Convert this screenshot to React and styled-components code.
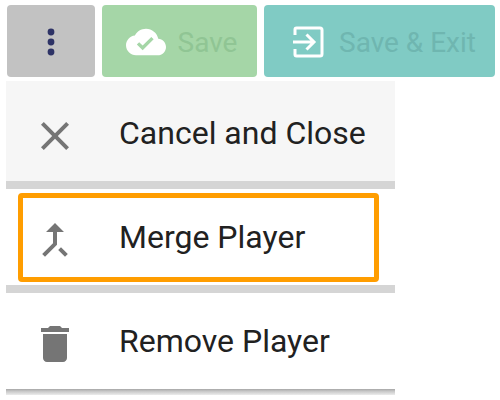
import React from "react";
import styled, { createGlobalStyle } from "styled-components";

const GlobalStyle = createGlobalStyle`
  html, body {
    margin: 0;
    background: #fff;
    font-family: Roboto, "Liberation Sans", sans-serif;
  }
`;

const Page = styled.div`
  width: 500px;
  height: 400px;
  padding: 5px 5px 0 7px;
  box-sizing: border-box;
  overflow: hidden;
`;

const Toolbar = styled.div`
  display: flex;
  gap: 7px;
  height: 72px;
`;

const ToolButton = styled.button`
  display: flex;
  align-items: center;
  justify-content: center;
  gap: ${({ $gap }) => $gap || 11}px;
  width: ${({ $width }) => $width}px;
  height: 72px;
  padding: 2px 0 0 ${({ $left }) => $left || 0}px;
  box-sizing: border-box;
  border: 0;
  border-radius: 4px;
  background: ${({ $bg }) => $bg};
  color: ${({ $color }) => $color};
  font: 400 28px Roboto, sans-serif;
`;

const Menu = styled.div`
  width: 389px;
  margin: 4px 0 0 -1px;
  display: flex;
  flex-direction: column;
`;

const Row = styled.div`
  height: ${({ $height }) => $height}px;
  background: ${({ $bg }) => $bg || "#fff"};
  border-bottom: ${({ $rule }) => $rule || "8px solid #d5d5d5"};
  padding: ${({ $top }) => $top || 0}px 16px 0 12px;
  box-sizing: content-box;
  display: flex;
  align-items: center;
`;

const Item = styled.div`
  flex: 1;
  height: ${({ $active }) => ($active ? "89px" : "auto")};
  display: flex;
  align-items: center;
  box-sizing: border-box;
  border: 5px solid ${({ $active }) => ($active ? "#ff9d00" : "transparent")};
  border-radius: 4px;
  color: #212121;
  font-size: 32px;
`;

const IconSlot = styled.span`
  display: flex;
  justify-content: center;
  width: 64px;
  margin: 6px 32px 0 0;
  color: #757575;
`;

const MenuIcon = styled.svg`
  width: 48px;
  height: 48px;
  fill: currentColor;
`;

const BottomEdge = styled.div`
  height: 6px;
  background: linear-gradient(#a6a6a6, #c6c6c6 35%, #ececec);
`;

const Close = () => (
  <MenuIcon viewBox="0 0 24 24">
    <path d="M19 6.41L17.59 5 12 10.59 6.41 5 5 6.41 10.59 12 5 17.59 6.41 19 12 13.41 17.59 19 19 17.59 13.41 12z" />
  </MenuIcon>
);

const Merge = () => (
  <MenuIcon viewBox="0 0 24 24">
    <path d="M17 20.41L18.41 19 15 15.59 13.59 17 17 20.41zM7.5 8H11v5.59L5.59 19 7 20.41l6-6V8h3.5L12 3.500 7.500 8z" />
  </MenuIcon>
);

const Trash = () => (
  <MenuIcon viewBox="0 0 24 24">
    <path d="M6 19c0 1.100.9 2 2 2h8c1.100 0 2-.9 2-2V7H6v12zM19 4h-3.500l-1-1h-5l-1 1H5v2h14V4z" />
  </MenuIcon>
);

const Dots = () => (
  <svg width="8" height="30" viewBox="0 0 8 30" fill="#2e3366">
    <circle cx="4" cy="5" r="3.4" />
    <circle cx="4" cy="15" r="3.4" />
    <circle cx="4" cy="25" r="3.4" />
  </svg>
);

const CloudCheck = () => (
  <svg width="40" height="40" viewBox="0 0 24 24" fill="#fff">
    <path d="M19.350 10.040C18.670 6.590 15.640 4 12 4 9.110 4 6.600 5.640 5.350 8.040 2.340 8.360 0 10.910 0 14c0 3.310 2.690 6 6 6h13c2.760 0 5-2.240 5-5 0-2.640-2.050-4.780-4.650-4.960zM10 17l-3.500-3.500 1.410-1.410L10 14.170 15.180 9l1.410 1.410L10 17z" />
  </svg>
);

const ExitBox = () => (
  <svg width="32" height="32" viewBox="0 0 32 32" fill="none" stroke="#fff" strokeWidth="3">
    <path d="M3 9 V3.500 Q3 2 4.500 2 H28 Q30 2 30 4 V28 Q30 30 28 30 H4.500 Q3 30 3 28.500 V23" />
    <path d="M1 16 H22 M14.500 8.500 L22 16 L14.500 23.500" />
  </svg>
);

export default function App() {
  return (
    <Page>
      <GlobalStyle />
      <Toolbar>
        <ToolButton $width={88} $bg="#c2c2c2" $color="#2e3366">
          <Dots />
        </ToolButton>
        <ToolButton $width={155} $bg="#a5d6a7" $color="#90c594" $left={4} $gap={12}>
          <CloudCheck />
          Save
        </ToolButton>
        <ToolButton $width={231} $bg="#80cbc4" $color="#6fb6b0" $gap={15} $left={9}>
          <ExitBox />
          Save &amp; Exit
        </ToolButton>
      </Toolbar>
      <Menu>
        <Row $height={96} $top={4} $bg="#f6f6f6">
          <Item>
            <IconSlot><Close /></IconSlot>
            Cancel and Close
          </Item>
        </Row>
        <Row $height={96}>
          <Item $active>
            <IconSlot><Merge /></IconSlot>
            Merge Player
          </Item>
        </Row>
        <Row $height={96} $rule="0">
          <Item>
            <IconSlot><Trash /></IconSlot>
            Remove Player
          </Item>
        </Row>
        <BottomEdge />
      </Menu>
    </Page>
  );
}
